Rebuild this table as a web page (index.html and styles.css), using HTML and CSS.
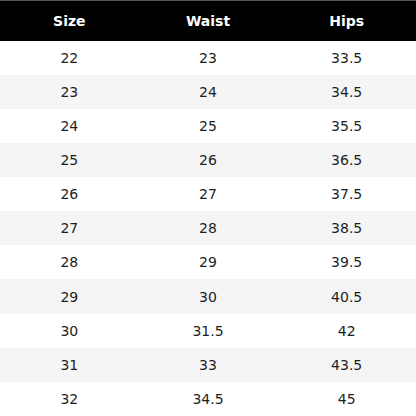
FILE: index.html
```html
<!DOCTYPE html>
<html>
<head>
<meta charset="utf-8">
<link rel="stylesheet" href="styles.css">
</head>
<body>
<table class="size-table">
  <thead>
    <tr><th>Size</th><th>Waist</th><th>Hips</th></tr>
  </thead>
  <tbody>
    <tr><td>22</td><td>23</td><td>33.5</td></tr>
    <tr><td>23</td><td>24</td><td>34.5</td></tr>
    <tr><td>24</td><td>25</td><td>35.5</td></tr>
    <tr><td>25</td><td>26</td><td>36.5</td></tr>
    <tr><td>26</td><td>27</td><td>37.5</td></tr>
    <tr><td>27</td><td>28</td><td>38.5</td></tr>
    <tr><td>28</td><td>29</td><td>39.5</td></tr>
    <tr><td>29</td><td>30</td><td>40.5</td></tr>
    <tr><td>30</td><td>31.5</td><td>42</td></tr>
    <tr><td>31</td><td>33</td><td>43.5</td></tr>
    <tr><td>32</td><td>34.5</td><td>45</td></tr>
  </tbody>
</table>
</body>
</html>
```

FILE: styles.css
```css
html, body {
  margin: 0;
  padding: 0;
  background: #ffffff;
}
.size-table {
  width: 416px;
  border-collapse: collapse;
  table-layout: fixed;
  font-family: "DejaVu Sans", sans-serif;
  font-size: 14px;
  color: #1e1e1e;
  border-top: 1px solid #555555;
  border-bottom: 1px solid #ececec;
}
.size-table th {
  background: #000000;
  color: #ffffff;
  font-weight: bold;
  height: 39.5px;
  padding: 0;
  text-align: center;
  vertical-align: middle;
}
.size-table td {
  height: 34.15px;
  padding: 0;
  text-align: center;
  vertical-align: middle;
}
.size-table tbody tr:nth-child(even) td {
  background: #f5f5f5;
}
```
